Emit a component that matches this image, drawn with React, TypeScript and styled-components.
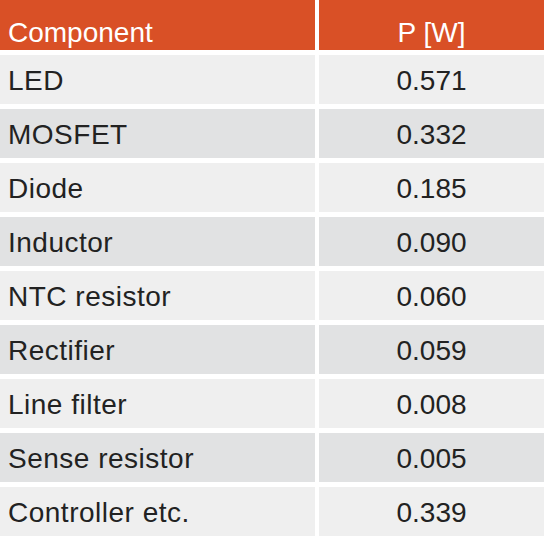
import React from "react";
import styled, { createGlobalStyle } from "styled-components";

const GlobalStyle = createGlobalStyle`
  html, body {
    margin: 0;
    padding: 0;
    background: #ffffff;
  }
  body {
    font-family: "Liberation Sans", Arial, sans-serif;
  }
`;

const Table = styled.div`
  display: grid;
  grid-template-columns: 315px 1fr;
  grid-template-rows: 50px;
  grid-auto-rows: 49px;
  column-gap: 4px;
  row-gap: 5px;
  width: 544px;
  background: #ffffff;
`;

const HeadCell = styled.div<{ $center?: boolean }>`
  background: #d95026;
  color: #ffffff;
  font-size: 28px;
  line-height: 1;
  display: flex;
  align-items: flex-end;
  justify-content: ${(p) => (p.$center ? "center" : "flex-start")};
  padding-left: ${(p) => (p.$center ? "0" : "8px")};
  padding-bottom: 3px;
  box-sizing: border-box;
`;

const Cell = styled.div<{ $center?: boolean; $dark?: boolean }>`
  background: ${(p) => (p.$dark ? "#e1e2e3" : "#efefef")};
  color: #222222;
  font-size: 28px;
  line-height: 49px;
  letter-spacing: ${(p) => (p.$center ? "0" : "0.5px")};
  display: flex;
  justify-content: ${(p) => (p.$center ? "center" : "flex-start")};
  padding-left: ${(p) => (p.$center ? "0" : "8px")};
  padding-top: 1px;
  box-sizing: border-box;
`;

const rows: [string, string][] = [
  ["LED", "0.571"],
  ["MOSFET", "0.332"],
  ["Diode", "0.185"],
  ["Inductor", "0.090"],
  ["NTC resistor", "0.060"],
  ["Rectifier", "0.059"],
  ["Line filter", "0.008"],
  ["Sense resistor", "0.005"],
  ["Controller etc.", "0.339"],
];

export default function App() {
  return (
    <>
      <GlobalStyle />
      <Table>
        <HeadCell>Component</HeadCell>
        <HeadCell $center>P [W]</HeadCell>
        {rows.map(([name, value], i) => (
          <React.Fragment key={name}>
            <Cell $dark={i % 2 === 1}>{name}</Cell>
            <Cell $dark={i % 2 === 1} $center>
              {value}
            </Cell>
          </React.Fragment>
        ))}
      </Table>
    </>
  );
}
